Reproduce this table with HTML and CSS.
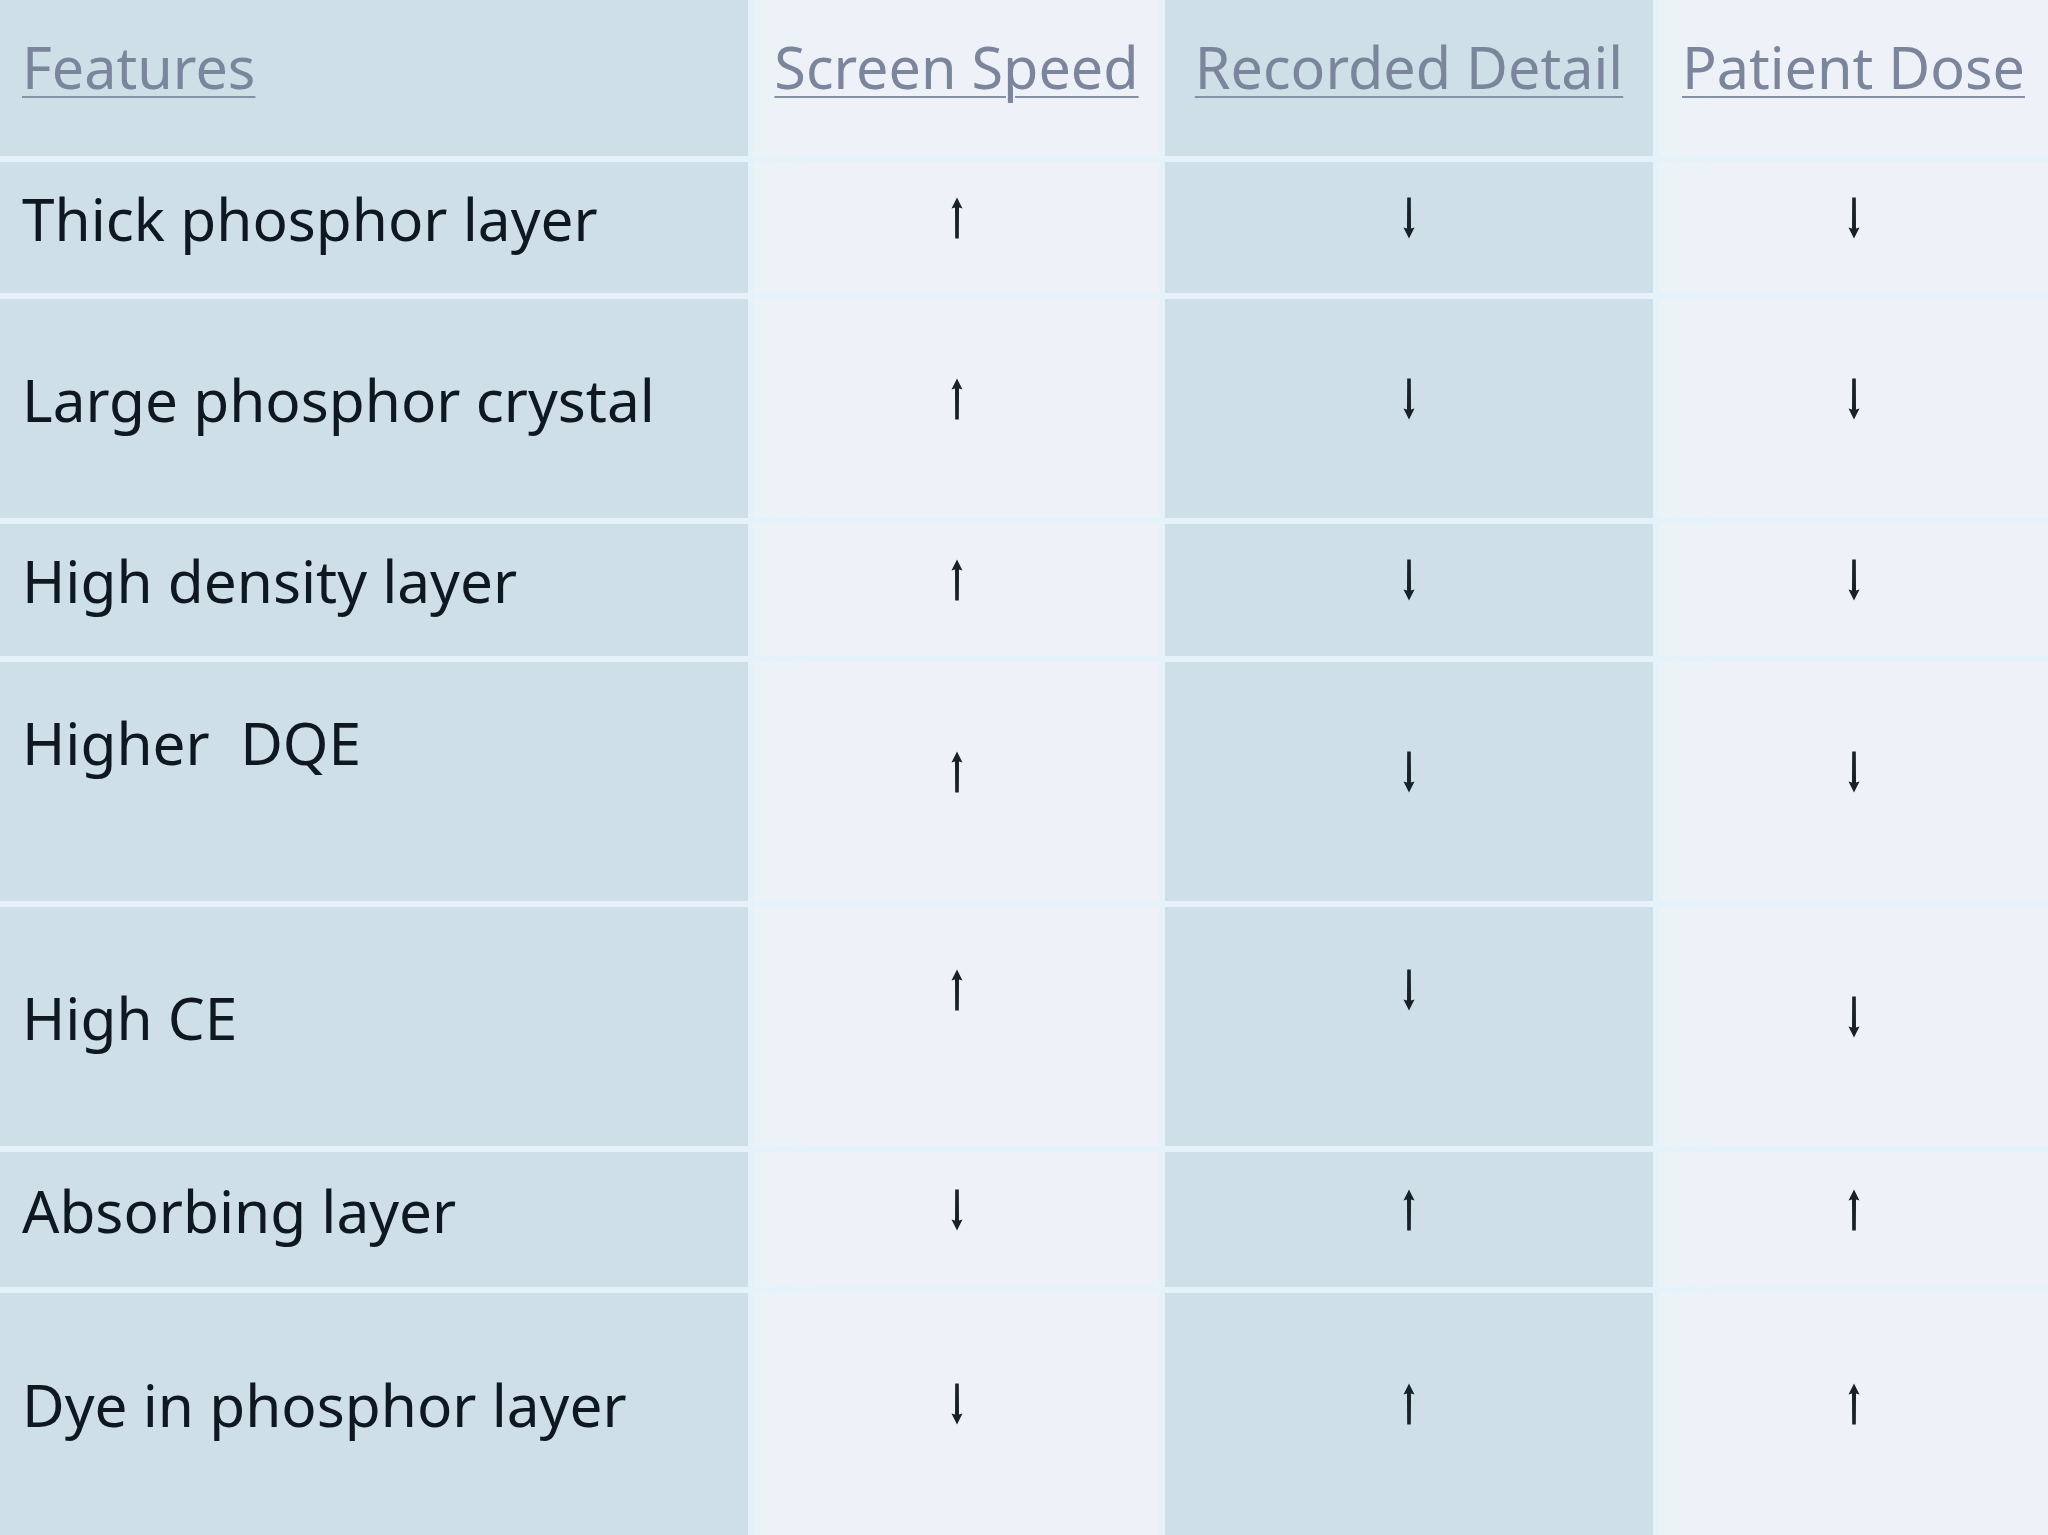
FILE: index.html
```html
<!DOCTYPE html>
<html lang="en">
<head>
<meta charset="utf-8">
<title>Screen features</title>
<link rel="stylesheet" href="styles.css">
</head>
<body>
<svg class="defs" width="0" height="0" aria-hidden="true">
  <symbol id="arrow" viewBox="0 0 16 42">
    <path d="M8 0.5 L13.5 11.5 L10 10.5 L9.8 41.5 L6.2 41.5 L6 10.5 L2.5 11.5 Z"/>
  </symbol>
</svg>
<div class="table">
  <div class="cell head c1 first"><span class="hl">Features</span></div>
  <div class="cell head c2"><span class="hl">Screen Speed</span></div>
  <div class="cell head c1"><span class="hl">Recorded Detail</span></div>
  <div class="cell head c2"><span class="hl">Patient Dose</span></div>

  <div class="cell c1 first">Thick phosphor layer</div>
  <div class="cell c2"><svg class="arr up"><use href="#arrow"/></svg></div>
  <div class="cell c1"><svg class="arr down"><use href="#arrow"/></svg></div>
  <div class="cell c2"><svg class="arr down"><use href="#arrow"/></svg></div>

  <div class="cell c1 first">Large phosphor crystal</div>
  <div class="cell c2"><svg class="arr up"><use href="#arrow"/></svg></div>
  <div class="cell c1"><svg class="arr down"><use href="#arrow"/></svg></div>
  <div class="cell c2"><svg class="arr down"><use href="#arrow"/></svg></div>

  <div class="cell c1 first">High density layer</div>
  <div class="cell c2"><svg class="arr up"><use href="#arrow"/></svg></div>
  <div class="cell c1"><svg class="arr down"><use href="#arrow"/></svg></div>
  <div class="cell c2"><svg class="arr down"><use href="#arrow"/></svg></div>

  <div class="cell c1 first top-text">Higher&nbsp; DQE</div>
  <div class="cell c2"><svg class="arr up"><use href="#arrow"/></svg></div>
  <div class="cell c1"><svg class="arr down"><use href="#arrow"/></svg></div>
  <div class="cell c2"><svg class="arr down"><use href="#arrow"/></svg></div>

  <div class="cell c1 first">High CE</div>
  <div class="cell c2 top-arrow"><svg class="arr up"><use href="#arrow"/></svg></div>
  <div class="cell c1 top-arrow"><svg class="arr down"><use href="#arrow"/></svg></div>
  <div class="cell c2"><svg class="arr down"><use href="#arrow"/></svg></div>

  <div class="cell c1 first">Absorbing layer</div>
  <div class="cell c2"><svg class="arr down"><use href="#arrow"/></svg></div>
  <div class="cell c1"><svg class="arr up"><use href="#arrow"/></svg></div>
  <div class="cell c2"><svg class="arr up"><use href="#arrow"/></svg></div>

  <div class="cell c1 first">Dye in phosphor layer</div>
  <div class="cell c2"><svg class="arr down"><use href="#arrow"/></svg></div>
  <div class="cell c1"><svg class="arr up"><use href="#arrow"/></svg></div>
  <div class="cell c2"><svg class="arr up"><use href="#arrow"/></svg></div>
</div>
</body>
</html>
```
FILE: styles.css
```css
html, body {
  margin: 0;
  padding: 0;
  background: #e6f2f9;
}

.defs {
  position: absolute;
  width: 0;
  height: 0;
  overflow: hidden;
}

.table {
  width: 2048px;
  height: 1535px;
  display: grid;
  grid-template-columns: 748px 405px 488px 389px;
  grid-template-rows: 156px 131px 219px 132px 239px 239px 135px 242px;
  gap: 6px;
  background: #e6f2f9;
  font-family: "Noto Sans", "DejaVu Sans", sans-serif;
  font-size: 58.5px;
  color: #0f1820;
  overflow: hidden;
}

.cell {
  display: flex;
  align-items: center;
  justify-content: center;
  padding-bottom: 20px;
  box-sizing: border-box;
  white-space: nowrap;
}

.c1 {
  background: #cfdfe8;
}

.c2 {
  background: linear-gradient(to right, #eaf3f5 0, #eef1f8 60px);
}

.first {
  justify-content: flex-start;
  padding-left: 22px;
}

.head {
  padding-bottom: 22px;
  font-size: 57.5px;
  color: #7b869c;
}

.hl {
  text-decoration: underline;
  text-decoration-thickness: 2px;
  text-underline-offset: 7px;
  text-decoration-color: #8591a8;
}

.top-text {
  align-items: flex-start;
  padding-top: 40px;
}

.top-arrow {
  align-items: flex-start;
  padding-top: 62px;
}

.arr {
  width: 16px;
  height: 42px;
  fill: #182028;
}

.arr.down {
  transform: rotate(180deg);
}
```
